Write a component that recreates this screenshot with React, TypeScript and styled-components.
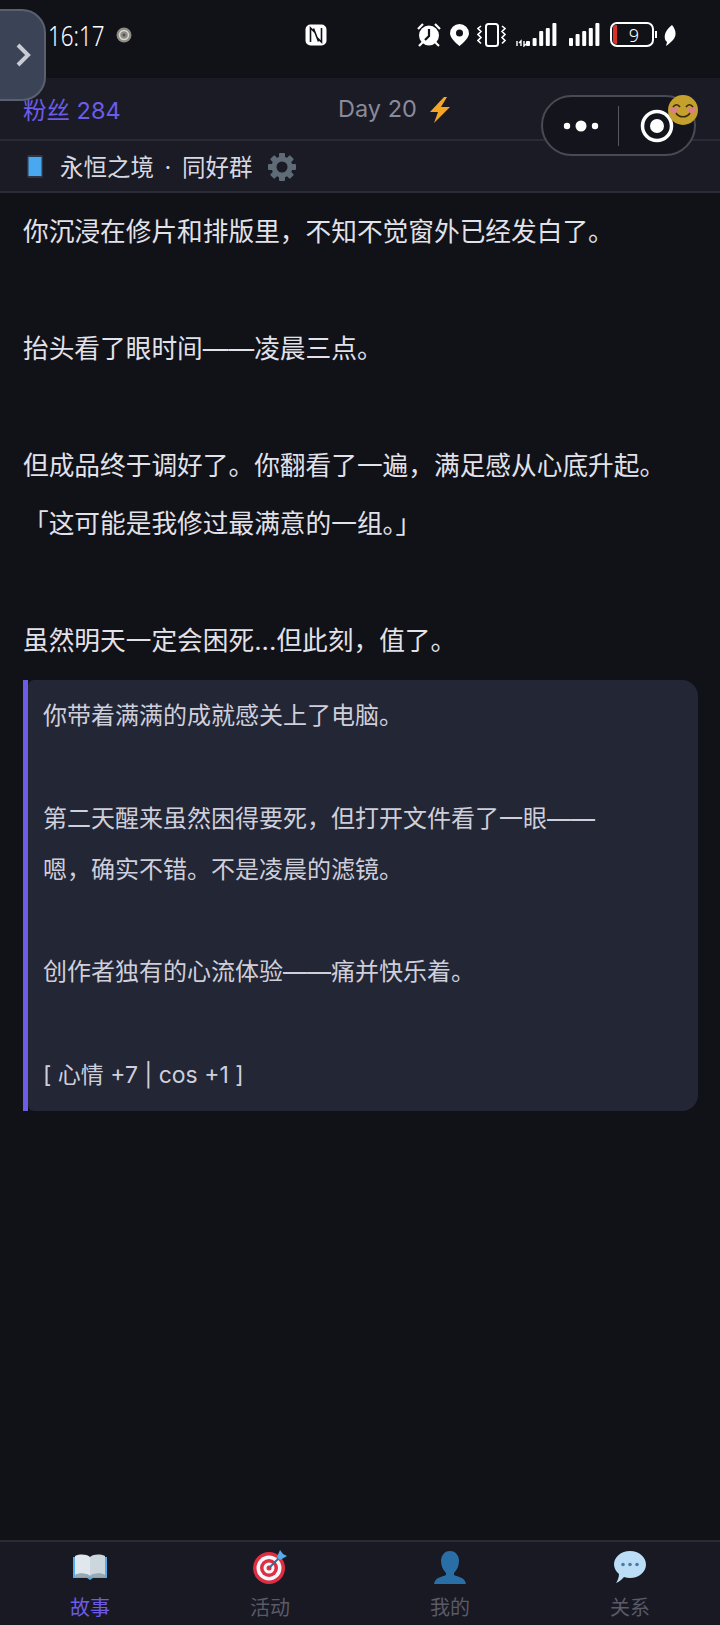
import React from 'react';
import styled, { createGlobalStyle } from 'styled-components';

const GlobalStyle = createGlobalStyle`
  html, body {
    margin: 0;
    padding: 0;
    background: #111118;
  }
  * {
    box-sizing: border-box;
  }
`;

const Page = styled.div`
  position: relative;
  width: 720px;
  height: 1625px;
  display: flex;
  flex-direction: column;
  overflow: hidden;
  background: #111118;
  color: #e8e8f0;
  font-family: Inter, "Noto Sans CJK SC", sans-serif;
`;

const StatusBar = styled.div`
  height: 78px;
  flex: none;
  display: flex;
  align-items: center;
  padding: 0 0 8px 48px;
  color: #fff;
`;

const Clock = styled.span`
  width: 66px;
  font-family: "Noto Sans", sans-serif;
  font-size: 28px;
  font-weight: 300;
  line-height: 1;
  transform: scaleX(0.8);
  transform-origin: left center;
`;

const StatusLeft = styled.div`
  width: 257px;
  display: flex;
  align-items: center;
  gap: 2px;
`;

const StatusRight = styled.div`
  margin-left: 90px;
  display: flex;
  align-items: center;
  gap: 5px;
`;

const TopBar = styled.div`
  height: 63px;
  flex: none;
  display: flex;
  align-items: center;
  padding: 0 23px 0;
  background: #1a1b24;
  border-bottom: 2px solid #2a2b36;
`;

const Fans = styled.div`
  width: 315px;
  font-size: 23.5px;
  color: #6c5ce7;
`;

const DayLabel = styled.div`
  display: flex;
  align-items: center;
  gap: 12px;
  font-size: 23.5px;
  color: #8a8a9a;
`;

const GroupBar = styled.div`
  height: 52px;
  flex: none;
  display: flex;
  align-items: center;
  padding: 0 0 0 27px;
  background: #1a1b24;
  border-bottom: 2px solid #2a2b36;
`;

const GroupName = styled.div`
  margin-left: 17px;
  margin-right: 15px;
  font-size: 23.5px;
  color: #d8d8e2;
  white-space: pre;
`;

const Separator = styled.span`
  margin: 0 4px;
`;

const Story = styled.main`
  flex: 1;
  padding: 10px 22px 0 23px;
`;

const Narration = styled.div`
  font-size: 25.7px;
  line-height: 58.4px;
  white-space: pre-line;
  color: #e2e2ea;
`;

const ResultCard = styled.section`
  margin-top: 10px;
  width: 675px;
  height: 431px;
  border-left: 5px solid #6c5ce7;
`;

const ResultBody = styled.div`
  height: 100%;
  padding: 10px 20px 0 15px;
  background: #232635;
  border-radius: 6px 16px 16px 6px;
  font-size: 24px;
  line-height: 51.2px;
  white-space: pre-line;
  color: #cfcfdb;
`;

const Stats = styled.span`
  font-size: 23px;
`;

const TabBar = styled.nav`
  height: 85px;
  flex: none;
  display: grid;
  grid-template-columns: repeat(4, 180px);
  background: #181922;
  border-top: 2px solid #2a2b36;
`;

const Tab = styled.div<{ $active?: boolean }>`
  display: flex;
  flex-direction: column;
  align-items: center;
  padding-top: 7px;
  gap: 8px;
  font-size: 20px;
  line-height: 30px;
  color: ${p => (p.$active ? '#6c5ce7' : '#5a5a68')};
`;

const IconSlot = styled.div`
  height: 36px;
  display: flex;
  align-items: center;
  justify-content: center;
`;

const SideHandle = styled.div`
  position: absolute;
  left: -2px;
  top: 9px;
  width: 48px;
  height: 92px;
  display: flex;
  align-items: center;
  justify-content: center;
  padding-left: 3px;
  background: #3b4356;
  border: 2px solid #5a6070;
  border-radius: 0 24px 24px 0;
`;

const Capsule = styled.div`
  position: absolute;
  left: 541px;
  top: 95px;
  width: 155px;
  height: 61px;
  display: flex;
  align-items: center;
  background: #14151c;
  border: 2px solid #484a54;
  border-radius: 31px;
`;

const CapsuleSide = styled.div`
  flex: 1;
  height: 100%;
  display: flex;
  align-items: center;
  justify-content: center;
`;

const CapsuleDivider = styled.div`
  width: 1px;
  height: 40px;
  background: #555763;
`;

const Sticker = styled.div`
  position: absolute;
  left: 668px;
  top: 95px;
  width: 30px;
  height: 30px;
`;

const BoltSvg = styled.svg`
  margin-top: 3px;
`;

const GearSvg = styled.svg`
  margin-top: 2px;
`;

const Chevron = () => (
  <svg width="18" height="26" viewBox="0 0 18 26">
    <path d="M3 3l10 10L3 23" fill="none" stroke="#c9ccd2" strokeWidth="4" />
  </svg>
);

const SmallAvatar = () => (
  <svg width="16" height="16" viewBox="0 0 16 16">
    <circle cx="8" cy="8" r="7.500" fill="#8d8d86" />
    <circle cx="8" cy="8" r="4.500" fill="none" stroke="#d8d8d0" strokeWidth="1.500" />
    <circle cx="8" cy="8" r="1.500" fill="#55554f" />
  </svg>
);

const NfcIcon = () => (
  <svg width="22" height="22" viewBox="0 0 22 22">
    <rect x="0.5" y="0.5" width="21" height="21" rx="5" fill="#fff" />
    <path d="M5.500 18V4l5 5M16.500 4v14l-5-5M8.500 4.500l5 13" fill="none" stroke="#111118" strokeWidth="1.600" />
  </svg>
);

const AlarmIcon = () => (
  <svg width="28" height="24" viewBox="0 0 28 24">
    <circle cx="12" cy="12.500" r="10" fill="#fff" />
    <path d="M12 6v7l-4 4" fill="none" stroke="#111118" strokeWidth="2.200" />
    <path d="M1 6l5-5M23 6l-5-5M2 23l4-4M22 23l-4-4" stroke="#fff" strokeWidth="2.200" />
  </svg>
);

const PinIcon = () => (
  <svg width="22" height="22" viewBox="0 0 22 22">
    <path d="M9.500 0a9.500 9.500 0 0 1 9.500 9.500C19 15 9.500 22 9.500 22S0 15 0 9.500A9.500 9.500 0 0 1 9.500 0z" fill="#fff" />
    <circle cx="9.500" cy="9" r="3.500" fill="#111118" />
  </svg>
);

const VibrateIcon = () => (
  <svg width="33" height="24" viewBox="0 0 33 24">
    <rect x="9" y="1" width="12" height="22" rx="2.500" fill="none" stroke="#fff" strokeWidth="2" />
    <path d="M4 3L1 5.500l3 3-3 3 3 3-3 3 3 3M25 3l3 2.500-3 3 3 3-3 3 3 3-3 3" fill="none" stroke="#fff" strokeWidth="1.600" />
  </svg>
);

// heights in px, bars are aligned to the right edge of the svg
const SignalIcon: React.FC<{ heights: number[]; width: number; tag?: boolean }> = ({ heights, width, tag }) => (
  <svg width={width} height="24" viewBox={`0 0 ${width} 24`}>
    {tag && <path d="M2 18v5M6 23v-5l-2 2M9 18v5l2-2" fill="none" stroke="#fff" strokeWidth="1.400" />}
    {heights.map((h, i) => (
      <rect key={i} x={width - (heights.length - i) * 6.6 + 2} y={23 - h} width="4" height={h} rx="1" fill="#fff" />
    ))}
  </svg>
);

const BatteryIcon = () => (
  <svg width="53" height="26" viewBox="0 0 53 26">
    <rect x="6" y="1" width="42" height="23" rx="6" fill="none" stroke="#fff" strokeWidth="2" />
    <path d="M8 6a3 3 0 0 1 3-3h1v19h-1a3 3 0 0 1-3-3z" fill="#d8322a" />
    <path d="M51 9v7" stroke="#fff" strokeWidth="2" />
    <text x="29" y="20" fontFamily="Noto Sans, sans-serif" fontSize="18" fontWeight="300" fill="#fff" textAnchor="middle">9</text>
  </svg>
);

const LeafIcon = () => (
  <svg width="13" height="21" viewBox="0 0 13 21">
    <path d="M9 0c4 5 5 10 1 15-2 2-4 4-7 6 0-1 1-3 1-4C0 14 1 6 9 0z" fill="#fff" />
  </svg>
);

const BoltIcon = () => (
  <BoltSvg width="22" height="26" viewBox="0 0 22 26">
    <path d="M15 0L1 15h8l-4 11 16-16h-9l6-10z" fill="#f5a623" />
  </BoltSvg>
);

const PhoneIcon = () => (
  <svg width="16" height="23" viewBox="0 0 16 23">
    <rect width="16" height="23" rx="2" fill="#2a3644" />
    <rect x="1.500" y="2" width="13" height="19" fill="#4aa8f0" />
  </svg>
);

const GearIcon = () => (
  <GearSvg width="28" height="28" viewBox="0 0 28 28">
    <g fill="#5f6b76">
      {[0, 45, 90, 135, 180, 225, 270, 315].map(a => (
        <rect key={a} x="11" y="0" width="6" height="7" rx="1" transform={`rotate(${a} 14 14)`} />
      ))}
    </g>
    <circle cx="14" cy="14" r="8" fill="none" stroke="#5f6b76" strokeWidth="5" />
  </GearSvg>
);

const BookIcon = () => (
  <svg width="34" height="27" viewBox="0 0 34 27">
    <path d="M0 3h34v21H20l-3 2-3-2H0z" fill="#55acee" />
    <path d="M2 2c5-2 11-2 15 1v19c-4-3-10-3-15-1z" fill="#e1e8ed" />
    <path d="M32 2c-5-2-11-2-15 1v19c4-3 10-3 15-1z" fill="#ccd6dd" />
    <path d="M2 21c5-2 11-2 15 1 4-3 10-3 15-1v2H2z" fill="#99aab5" />
  </svg>
);

const TargetIcon = () => (
  <svg width="34" height="34" viewBox="0 0 34 34">
    <circle cx="16" cy="18" r="16" fill="#dd2e44" />
    <circle cx="16" cy="18" r="12.500" fill="#f5f8fa" />
    <circle cx="16" cy="18" r="9" fill="#dd2e44" />
    <circle cx="16" cy="18" r="5.500" fill="#f5f8fa" />
    <circle cx="16" cy="18" r="2.500" fill="#dd2e44" />
    <path d="M16 18L28 6" stroke="#31708f" strokeWidth="2" />
    <path d="M24 7l3-7 3 4 4 2-7 4z" fill="#55acee" />
  </svg>
);

const PersonIcon = () => (
  <svg width="32" height="33" viewBox="0 0 32 33">
    <path d="M16 0c6 0 9 5 9 10 0 5-2 9-5 12v2c4 2 11 2 12 9H0c1-7 8-7 12-9v-2c-3-3-5-7-5-12C7 5 10 0 16 0z" fill="#2a6ea6" />
  </svg>
);

const BubbleIcon = () => (
  <svg width="34" height="32" viewBox="0 0 34 32">
    <path d="M17 0c9 0 16 6 16 13.500S26 27 17 27c-2 0-4-.3-6-1-2 2-5 5-8 6 1.500-2 3-6 3-9-3-2.500-5-6-5-9.500C1 6 8 0 17 0z" fill="#bbddf5" />
    <circle cx="10" cy="13.500" r="1.800" fill="#4a7ba6" />
    <circle cx="17" cy="13.500" r="1.800" fill="#4a7ba6" />
    <circle cx="24" cy="13.500" r="1.800" fill="#4a7ba6" />
  </svg>
);

const MoreDots = () => (
  <svg width="36" height="14" viewBox="0 0 36 14">
    <circle cx="4" cy="7" r="3.200" fill="#fff" />
    <circle cx="18" cy="7" r="5.500" fill="#fff" />
    <circle cx="32" cy="7" r="3.200" fill="#fff" />
  </svg>
);

const RecordIcon = () => (
  <svg width="34" height="34" viewBox="0 0 34 34">
    <circle cx="17" cy="17" r="14.500" fill="none" stroke="#fff" strokeWidth="3.500" />
    <circle cx="17" cy="17" r="7" fill="#fff" />
  </svg>
);

const SmileSticker = () => (
  <svg width="30" height="30" viewBox="0 0 30 30">
    <circle cx="15" cy="15" r="15" fill="#c4a02c" />
    <ellipse cx="6" cy="15" rx="4" ry="3" fill="#d9808a" />
    <ellipse cx="24" cy="15" rx="4" ry="3" fill="#d9808a" />
    <path d="M5 12c2-3 5-3 7 0M18 12c2-3 5-3 7 0M8 18c3 5 11 5 14 0" fill="none" stroke="#3a2a10" strokeWidth="1.600" />
  </svg>
);

const narration = `你沉浸在修片和排版里，不知不觉窗外已经发白了。

抬头看了眼时间——凌晨三点。

但成品终于调好了。你翻看了一遍，满足感从心底升起。
「这可能是我修过最满意的一组。」

虽然明天一定会困死...但此刻，值了。`;

const result = `你带着满满的成就感关上了电脑。

第二天醒来虽然困得要死，但打开文件看了一眼——
嗯，确实不错。不是凌晨的滤镜。

创作者独有的心流体验——痛并快乐着。

`;

const tabs = [
  { label: '故事', icon: <BookIcon />, active: true },
  { label: '活动', icon: <TargetIcon /> },
  { label: '我的', icon: <PersonIcon /> },
  { label: '关系', icon: <BubbleIcon /> },
];

export default function App() {
  return (
    <Page>
      <GlobalStyle />
      <StatusBar>
        <StatusLeft>
          <Clock>16:17</Clock>
          <SmallAvatar />
        </StatusLeft>
        <NfcIcon />
        <StatusRight>
          <AlarmIcon />
          <PinIcon />
          <VibrateIcon />
          <SignalIcon heights={[5, 8, 15, 18, 23]} width={42} tag />
          <SignalIcon heights={[8, 12, 15, 18, 23]} width={38} />
          <BatteryIcon />
          <LeafIcon />
        </StatusRight>
      </StatusBar>
      <TopBar>
        <Fans>粉丝 284</Fans>
        <DayLabel>
          Day 20
          <BoltIcon />
        </DayLabel>
      </TopBar>
      <GroupBar>
        <PhoneIcon />
        <GroupName>
          永恒之境 <Separator>·</Separator> 同好群
        </GroupName>
        <GearIcon />
      </GroupBar>
      <Story>
        <Narration>{narration}</Narration>
        <ResultCard>
          <ResultBody>
            {result}
            <Stats>[ 心情 +7 | cos +1 ]</Stats>
          </ResultBody>
        </ResultCard>
      </Story>
      <TabBar>
        {tabs.map(tab => (
          <Tab key={tab.label} $active={tab.active}>
            <IconSlot>{tab.icon}</IconSlot>
            {tab.label}
          </Tab>
        ))}
      </TabBar>
      <SideHandle>
        <Chevron />
      </SideHandle>
      <Capsule>
        <CapsuleSide>
          <MoreDots />
        </CapsuleSide>
        <CapsuleDivider />
        <CapsuleSide>
          <RecordIcon />
        </CapsuleSide>
      </Capsule>
      <Sticker>
        <SmileSticker />
      </Sticker>
    </Page>
  );
}
